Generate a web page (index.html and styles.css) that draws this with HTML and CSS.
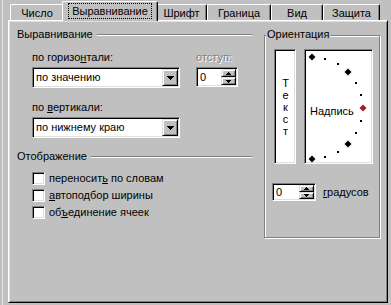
FILE: index.html
```html
<!DOCTYPE html>
<html lang="ru">
<head>
<meta charset="utf-8">
<title>Формат ячеек</title>
<link rel="stylesheet" href="styles.css">
</head>
<body>
<div class="frame">
  <div class="tabs">
    <div class="tab w1">Число</div>
    <div class="tab sel"><span class="focus">Выравнивание</span></div>
    <div class="tab w3">Шрифт</div>
    <div class="tab w4">Граница</div>
    <div class="tab w5">Вид</div>
    <div class="tab w6">Защита</div>
  </div>
  <div class="panel">
    <div class="left">
      <div class="heading"><span>Выравнивание</span><i class="etch"></i></div>
      <div class="hrow">
        <div class="field f1">
          <div class="lbl">по горизо<u>н</u>тали:</div>
          <div class="combo"><span class="val">по значению</span><b class="btn"><svg width="7" height="4"><rect x="0" y="0" width="7" height="1"/><rect x="1" y="1" width="5" height="1"/><rect x="2" y="2" width="3" height="1"/><rect x="3" y="3" width="1" height="1"/></svg></b></div>
        </div>
        <div class="field f2">
          <div class="lbl dis">отступ:</div>
          <div class="spin s1"><span class="val">0</span><b class="sbtns"><b class="sb"><svg width="5" height="3"><rect x="2" y="0" width="1" height="1"/><rect x="1" y="1" width="3" height="1"/><rect x="0" y="2" width="5" height="1"/></svg></b><b class="sb"><svg width="5" height="3"><rect x="0" y="0" width="5" height="1"/><rect x="1" y="1" width="3" height="1"/><rect x="2" y="2" width="1" height="1"/></svg></b></b></div>
        </div>
      </div>
      <div class="field f3">
        <div class="lbl">по <u>в</u>ертикали:</div>
        <div class="combo"><span class="val">по нижнему краю</span><b class="btn"><svg width="7" height="4"><rect x="0" y="0" width="7" height="1"/><rect x="1" y="1" width="5" height="1"/><rect x="2" y="2" width="3" height="1"/><rect x="3" y="3" width="1" height="1"/></svg></b></div>
      </div>
      <div class="heading h2"><span>Отображение</span><i class="etch"></i></div>
      <div class="checks">
        <div class="chk"><i class="box"></i><span>переносит<u>ь</u> по словам</span></div>
        <div class="chk"><i class="box"></i><span><u>а</u>втоподбор ширины</span></div>
        <div class="chk"><i class="box"></i><span>об<u>ъ</u>единение ячеек</span></div>
      </div>
    </div>
    <div class="group">
      <span class="cap">Ориентация</span>
      <div class="orow">
        <div class="vbox"><span>Т</span><span>е</span><span>к</span><span>с</span><span>т</span></div>
        <div class="arc">
          <svg class="arcsvg" width="65" height="111" viewBox="0 0 65 111">
            <polygon points="5,1.5 8.5,5 5,8.5 1.5,5"/>
            <rect x="17" y="6" width="2" height="2"/>
            <rect x="30" y="11" width="2" height="2"/>
            <polygon points="41,16.5 44.5,20 41,23.5 37.5,20"/>
            <rect x="48" y="30" width="2" height="2"/>
            <rect x="53" y="42" width="2" height="2"/>
            <polygon class="red" points="56,52.5 59.5,56 56,59.5 52.5,56"/>
            <rect x="53" y="68" width="2" height="2"/>
            <rect x="48" y="80" width="2" height="2"/>
            <polygon points="41,88.5 44.5,92 41,95.5 37.5,92"/>
            <rect x="30" y="99" width="2" height="2"/>
            <rect x="17" y="104" width="2" height="2"/>
            <polygon points="5,103.5 8.5,107 5,110.5 1.5,107"/>
          </svg>
          <span class="nad">Надпись</span>
        </div>
      </div>
      <div class="drow">
        <div class="spin s2"><span class="val">0</span><b class="sbtns"><b class="sb"><svg width="5" height="3"><rect x="2" y="0" width="1" height="1"/><rect x="1" y="1" width="3" height="1"/><rect x="0" y="2" width="5" height="1"/></svg></b><b class="sb"><svg width="5" height="3"><rect x="0" y="0" width="5" height="1"/><rect x="1" y="1" width="3" height="1"/><rect x="2" y="2" width="1" height="1"/></svg></b></b></div>
        <span class="deg"><u>г</u>радусов</span>
      </div>
    </div>
  </div>
</div>
</body>
</html>
```
FILE: styles.css
```css
* { box-sizing: border-box; }
html, body { margin: 0; padding: 0; }
body {
  width: 391px; height: 305px; overflow: hidden;
  background: #c0c0c0; color: #000;
  font: 11px/13px "Liberation Sans", Arial, sans-serif;
}
u { text-decoration: underline; text-underline-offset: 1px; }
.frame { margin-left: 2px; border-left: 1px solid #e6e6e6; padding-left: 5px; height: 305px; }

/* tabs */
.tabs { display: flex; align-items: flex-end; height: 20px; padding-left: 2px; }
.tab {
  height: 16px; padding-top: 2px; text-align: center; white-space: nowrap;
  border-top: 1px solid #fff; border-left: 1px solid #fff; border-right: 1px solid #000;
  box-shadow: inset -1px 0 #808080; border-radius: 2px 2px 0 0;
  background: #c0c0c0;
}
.w1 { width: 54px; }
.w3 { width: 51px; }
.w4 { width: 64px; }
.w5 { width: 52px; }
.w6 { width: 57px; }
.tab.sel {
  width: 96px; height: 20px; margin: 0 -2px -1px; padding-top: 1px;
  position: relative; z-index: 1;
}
.focus { display: inline-block; border: 1px dotted #000; padding: 1px 3px 0; line-height: 13px; }

/* panel */
.panel {
  width: 380px; height: 283px; display: flex; align-items: flex-start;
  padding: 7px 0 0 8px;
  border: 1px solid; border-color: #fff #000 #000 #fff;
  box-shadow: inset 1px 1px #dfdfdf, inset -1px -1px #808080;
}
.left { width: 235px; }
.heading { display: flex; align-items: center; height: 13px; }
.etch { flex: 1; height: 2px; border-top: 1px solid #808080; border-bottom: 1px solid #fff; margin-left: 4px; margin-top: 1px; }
.h2 { margin-top: 12px; }
.hrow { display: flex; gap: 16px; padding-left: 15px; margin-top: 10px; }
.field { display: flex; flex-direction: column; }
.f3 { padding-left: 15px; margin-top: 13px; }
.lbl { height: 13px; margin-bottom: 3px; }
.dis { color: #808080; text-shadow: 1px 1px #fff; }

.combo, .spin, .box, .vbox, .arc {
  border: 1px solid; border-color: #808080 #fff #fff #808080;
  box-shadow: inset 1px 1px #000, inset -1px -1px #dfdfdf;
  background: #fff;
}
.combo { width: 148px; height: 21px; padding: 1px; display: flex; align-items: center; }
.val { flex: 1; padding-left: 2px; }
.btn, .sb {
  display: flex; align-items: center; justify-content: center;
  background: #c0c0c0;
  border: 1px solid; border-color: #dfdfdf #000 #000 #dfdfdf;
  box-shadow: inset 1px 1px #fff, inset -1px -1px #808080;
}
.btn { width: 16px; height: 17px; }
.btn svg, .sb svg { display: block; fill: #000; }
.btn svg { margin-top: 1px; }

.spin { height: 20px; padding: 1px; display: flex; align-items: center; }
.s1 { width: 42px; }
.s2 { width: 44px; height: 18px; }
.sbtns { display: flex; flex-direction: column; width: 15px; align-self: stretch; }
.sb { flex: 1; }

.checks { padding-left: 15px; margin-top: 7px; }
.chk { display: flex; align-items: center; gap: 4px; height: 17px; }
.box { width: 13px; height: 13px; }

/* orientation group */
.group {
  width: 116px; height: 203px; margin: 7px 0 0 12px;
  border: 1px solid #808080;
  box-shadow: 1px 1px 0 #fff, inset 1px 1px 0 #fff;
  display: flex; flex-direction: column; align-items: flex-start;
}
.cap { margin: -8px 0 0 1px; padding: 0 1px; background: #c0c0c0; height: 13px; }
.orow { display: flex; gap: 8px; margin-top: 8px; padding-left: 9px; }
.vbox {
  width: 22px; height: 115px; display: flex; flex-direction: column;
  align-items: center; justify-content: center; line-height: 12px; padding-left: 1px;
}
.arc { width: 69px; height: 115px; position: relative; padding: 2px; }
.arcsvg { position: absolute; left: 2px; top: 2px; fill: #000; }
.arcsvg .red { fill: #a01c2c; }
.nad { display: block; margin: 53px 0 0 3px; position: relative; }
.drow { display: flex; align-items: center; gap: 7px; margin-top: 19px; padding-left: 7px; }
.deg { padding-top: 1px; }
```
